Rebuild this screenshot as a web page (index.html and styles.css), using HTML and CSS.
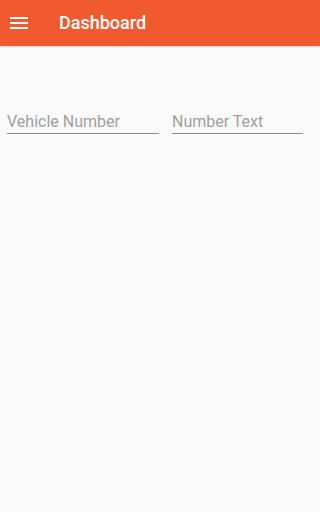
FILE: index.html
```html
<!DOCTYPE html>
<html>
<head>
<meta charset="utf-8">
<link rel="stylesheet" href="styles.css">
</head>
<body>
<header class="appbar">
  <svg class="menu" width="24" height="24" viewBox="0 0 24 24"><path d="M3 6h18v2H3zM3 11h18v2H3zM3 16h18v2H3z" fill="#fff"/></svg>
  <h1 class="title">Dashboard</h1>
</header>
<main class="content">
  <div class="fields">
    <input class="field field-vehicle" type="text" placeholder="Vehicle Number">
    <input class="field field-number" type="text" placeholder="Number Text">
  </div>
</main>
</body>
</html>
```
FILE: styles.css
```css
html, body {
  margin: 0;
  padding: 0;
  background: #fafafa;
  font-family: Roboto, "Liberation Sans", sans-serif;
}
.appbar {
  height: 46px;
  background: #f15a2f;
  display: flex;
  align-items: center;
  box-shadow: 0 1px 2px rgba(0,0,0,0.15);
}
.menu {
  margin-left: 7px;
  flex: none;
}
.title {
  margin: 0 0 0 28px;
  font-size: 18px;
  font-weight: 500;
  color: #fff;
  line-height: 1;
}
.content {
  padding: 66px 0 0 7px;
}
.fields {
  display: flex;
  gap: 13px;
}
.field {
  box-sizing: border-box;
  height: 22px;
  padding: 0 0 2px 0;
  margin: 0;
  border: none;
  border-bottom: 1px solid #8c8c8c;
  background: transparent;
  font-family: Roboto, "Liberation Sans", sans-serif;
  font-size: 16px;
  line-height: 19px;
  color: #333;
  outline: none;
}
.field::placeholder {
  color: #a0a0a0;
  opacity: 1;
}
.field-vehicle { width: 152px; }
.field-number { width: 131px; }
```
